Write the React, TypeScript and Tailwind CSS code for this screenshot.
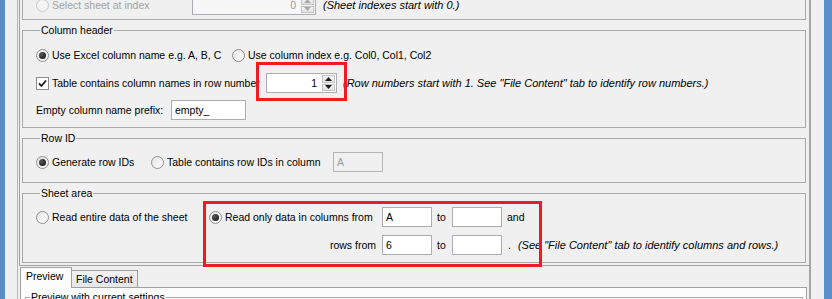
import React from 'react'

function Radio({ checked = false, disabled = false }: { checked?: boolean; disabled?: boolean }) {
  return (
    <span
      className={`flex h-[13px] w-[13px] shrink-0 items-center justify-center rounded-full border ${
        disabled ? 'border-[#c9c9c9] bg-[#f4f4f4]' : 'border-[#8e8f8f] bg-[linear-gradient(135deg,#e4e4e4,#ffffff)]'
      }`}
    >
      {checked && <span className="h-[7px] w-[7px] rounded-full bg-[radial-gradient(circle_at_35%_35%,#5a5a5a,#0a0a0a)]" />}
    </span>
  )
}

function CheckBox({ checked = false }: { checked?: boolean }) {
  return (
    <span className="flex h-[13px] w-[13px] shrink-0 items-center justify-center border border-[#8e8f8f] bg-white">
      {checked && (
        <svg width="9" height="9" viewBox="0 0 9 9">
          <path d="M1 4.5 L3.5 7 L8 1.5" fill="none" stroke="#1c1c1c" strokeWidth="1.8" />
        </svg>
      )}
    </span>
  )
}

function Field({ value = '', width, disabled = false }: { value?: string; width: string; disabled?: boolean }) {
  return (
    <div
      className={`flex h-[20px] shrink-0 items-center border px-[3px] ${width} ${
        disabled ? 'border-[#b5b5b5] bg-[#f0f0f0] text-[#9a9a9a]' : 'border-[#abadb3] bg-white text-black'
      }`}
    >
      {value}
    </div>
  )
}

function Spinner({ value, width, disabled = false }: { value: string; width: string; disabled?: boolean }) {
  const arrow = disabled ? '#a8a8a8' : '#1c1c1c'
  return (
    <div className={`flex h-[20px] shrink-0 border border-[#abadb3] ${width} ${disabled ? 'bg-[#f7f7f7]' : 'bg-white'}`}>
      <div className={`flex flex-1 items-center justify-end pr-[4px] ${disabled ? 'text-[#9a9a9a]' : 'text-black'}`}>{value}</div>
      <div className="flex w-[15px] flex-col gap-[1px] p-[1px]">
        <div className="flex flex-1 items-center justify-center border border-[#c3c3c3] bg-[linear-gradient(#f6f6f6,#e3e3e3)]">
          <svg width="7" height="4" viewBox="0 0 7 4">
            <path d="M0 4 L3.5 0 L7 4 Z" fill={arrow} />
          </svg>
        </div>
        <div className="flex flex-1 items-center justify-center border border-[#c3c3c3] bg-[linear-gradient(#f6f6f6,#e3e3e3)]">
          <svg width="7" height="4" viewBox="0 0 7 4">
            <path d="M0 0 L7 0 L3.5 4 Z" fill={arrow} />
          </svg>
        </div>
      </div>
    </div>
  )
}

function Group({ title, className, children }: { title: string; className: string; children: React.ReactNode }) {
  return (
    <div className={`w-[784px] border border-[#a9a9a9] ${className}`}>
      <div className="-mt-[7px] ml-[4px] w-fit bg-[#f0f0f0] px-[1px] leading-[13px]">{title}</div>
      {children}
    </div>
  )
}

export default function App() {
  return (
    <div className="flex h-[299px] w-[832px] overflow-hidden bg-[#f0f0f0] font-['Liberation_Sans',Arial,sans-serif] text-[10.5px] leading-[13px] text-black">
      <div className="w-[5px] shrink-0 bg-[#5b8dc9]" />

      <div className="w-[819px] shrink-0">
        <div className="ml-[12px] h-full w-[794px] border-l border-r-2 border-l-[#b4b4b4] border-r-[#a3a3a3]">
          {/* upper settings panel */}
          <div className="ml-[1px] border-b border-l border-[#a0a0a0] pb-[2px] pl-[2px]">
            {/* sheet selection (cut off at the top) */}
            <div className="h-[20px] w-[784px] overflow-hidden border-x border-b border-[#a9a9a9] pl-[13px]">
              <div className="-mt-[5px] flex h-[20px] items-center">
                <div className="flex w-[156px] items-center gap-[3px] text-[#a3a3a3]">
                  <Radio disabled />
                  <span>Select sheet at index</span>
                </div>
                <Spinner value="0" width="w-[124px]" disabled />
                <span className="ml-[7px] text-[11px] italic">(Sheet indexes start with 0.)</span>
              </div>
            </div>

            <Group title="Column header" className="mt-[10px] pb-[7px] pl-[13px]">
              <div className="mt-[8px] flex h-[20px] items-center">
                <div className="flex w-[196px] items-center gap-[3px]">
                  <Radio checked />
                  <span>Use Excel column name e.g. A, B, C</span>
                </div>
                <div className="flex items-center gap-[3px]">
                  <Radio />
                  <span>Use column index e.g. Col0, Col1, Col2</span>
                </div>
              </div>
              <div className="mt-[8px] flex h-[20px] items-center">
                <div className="flex w-[230px] items-center gap-[3px]">
                  <CheckBox checked />
                  <span>Table contains column names in row number</span>
                </div>
                <Spinner value="1" width="w-[71px]" />
                <span className="ml-[6px] text-[11px] italic">
                  (Row numbers start with 1. See &quot;File Content&quot; tab to identify row numbers.)
                </span>
              </div>
              <div className="mt-[7px] flex h-[20px] items-center">
                <span className="w-[135px]">Empty column name prefix:</span>
                <Field value="empty_" width="w-[75px]" />
              </div>
            </Group>

            <Group title="Row ID" className="mt-[10px] pb-[10px] pl-[13px]">
              <div className="mt-[7px] flex h-[20px] items-center">
                <div className="flex w-[115px] items-center gap-[3px]">
                  <Radio checked />
                  <span>Generate row IDs</span>
                </div>
                <div className="flex w-[182px] items-center gap-[3px]">
                  <Radio />
                  <span>Table contains row IDs in column</span>
                </div>
                <Field value="A" width="w-[50px]" disabled />
              </div>
            </Group>

            <Group title="Sheet area" className="mt-[10px] pb-[7px] pl-[13px]">
              <div className="mt-[7px] flex">
                <div className="flex h-[20px] w-[173px] items-center gap-[3px]">
                  <Radio />
                  <span>Read entire data of the sheet</span>
                </div>
                <div className="grid grid-cols-[173px_50px_20px_50px_auto] gap-y-[8px]">
                  <div className="flex h-[20px] items-center gap-[3px]">
                    <Radio checked />
                    <span>Read only data in columns from</span>
                  </div>
                  <Field value="A" width="w-[50px]" />
                  <span className="flex items-center pl-[5px]">to</span>
                  <Field width="w-[50px]" />
                  <span className="flex items-center pl-[5px]">and</span>

                  <span className="flex h-[20px] items-center justify-end pr-[6px]">rows from</span>
                  <Field value="6" width="w-[50px]" />
                  <span className="flex items-center pl-[5px]">to</span>
                  <Field width="w-[50px]" />
                  <span className="flex items-center pl-[6px]">
                    .<span className="ml-[7px] text-[11px] italic">(See &quot;File Content&quot; tab to identify columns and rows.)</span>
                  </span>
                </div>
              </div>
            </Group>
          </div>

          {/* tabbed pane */}
          <div className="ml-[2px] mt-[1px] w-[787px]">
            <div className="flex h-[20px] items-end">
              <div className="relative z-10 -mb-px h-[21px] w-[52px] border-x border-t border-[#a0a0a0] bg-[#fcfcfc] pl-[5px] pt-[2px]">
                Preview
              </div>
              <div className="h-[17px] w-[66px] border-r border-t border-[#a0a0a0] bg-[linear-gradient(#f2f2f2,#e6e6e6)] pl-[4px] pt-[2px]">
                File Content
              </div>
            </div>
            <div className="h-[30px] border border-[#a0a0a0] bg-[#fcfcfc] pl-[4px] pr-[3px] pt-[9px]">
              <div className="h-[20px] border-x border-t border-[#a9a9a9]">
                <div className="-mt-[7px] ml-[4px] w-fit bg-[#fcfcfc] px-[1px]">Preview with current settings</div>
              </div>
            </div>
          </div>
        </div>
      </div>

      <div className="w-[8px] shrink-0 bg-[#5b8dc9]" />

      {/* annotation boxes */}
      <div className="pointer-events-none absolute left-[256px] top-[62px] h-[39px] w-[91px] border-[3px] border-[#ed1c24]" />
      <div className="pointer-events-none absolute left-[203px] top-[201px] h-[66px] w-[339px] border-[3px] border-[#ed1c24]" />
    </div>
  )
}
